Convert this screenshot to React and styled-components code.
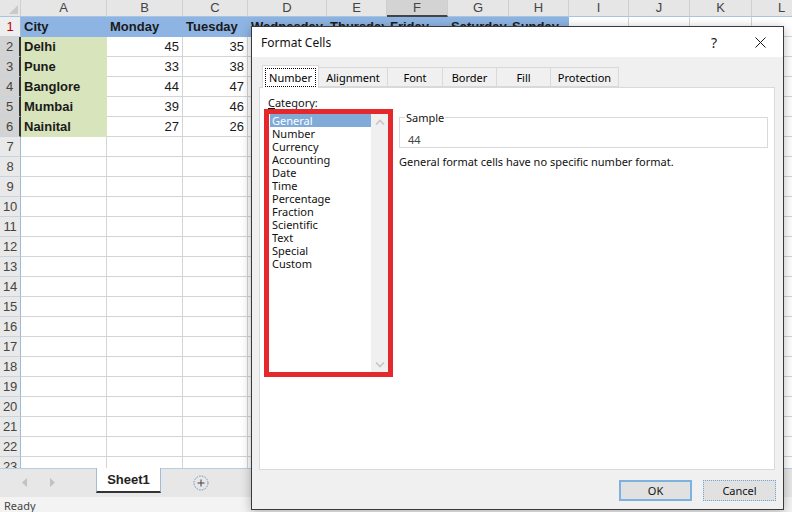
import React from 'react'
import styled, { createGlobalStyle } from 'styled-components'

const GlobalStyle = createGlobalStyle`
  html, body {
    margin: 0;
    padding: 0;
  }
  body {
    width: 792px;
    height: 512px;
    overflow: hidden;
    background: #fff;
    font-family: "Liberation Sans", Arial, sans-serif;
  }
  * {
    box-sizing: border-box;
  }
`

const COLS = [
  { id: 'A', w: 86 },
  { id: 'B', w: 76 },
  { id: 'C', w: 65 },
  { id: 'D', w: 79 },
  { id: 'E', w: 60 },
  { id: 'F', w: 61 },
  { id: 'G', w: 61 },
  { id: 'H', w: 60 },
  { id: 'I', w: 60 },
  { id: 'J', w: 61 },
  { id: 'K', w: 62 },
  { id: 'L', w: 60 },
]

const HEADER = ['City', 'Monday', 'Tuesday', 'Wednesday', 'Thursday', 'Friday', 'Saturday', 'Sunday']

const DATA = [
  ['Delhi', 45, 35],
  ['Pune', 33, 38],
  ['Banglore', 44, 47],
  ['Mumbai', 39, 46],
  ['Nainital', 27, 26],
]

const CATEGORIES = [
  'General', 'Number', 'Currency', 'Accounting', 'Date', 'Time',
  'Percentage', 'Fraction', 'Scientific', 'Text', 'Special', 'Custom',
]

const TABS = [
  { label: 'Number', w: 57 },
  { label: 'Alignment', w: 70 },
  { label: 'Font', w: 56 },
  { label: 'Border', w: 55 },
  { label: 'Fill', w: 55 },
  { label: 'Protection', w: 69 },
]

const BLUE_FILL = '#8db4e2'
const GREEN_FILL = '#d8e4bc'

const cellFor = (row, ci) => {
  if (row === 1 && ci < HEADER.length) {
    return { text: HEADER[ci], fill: BLUE_FILL, bold: true }
  }
  if (row >= 2 && row <= 6) {
    const rec = DATA[row - 2]
    if (ci === 0) return { text: rec[0], fill: GREEN_FILL, bold: true }
    if (ci === 1 || ci === 2) return { text: rec[ci], num: true }
  }
  return { text: '' }
}

export default function App() {
  const rowNumbers = Array.from({ length: 23 }, (_, i) => i + 1)

  return (
    <>
      <GlobalStyle />
      <Window>
        <Sheet>
          <HeaderRow>
            <Corner>
              <svg width="21" height="17" viewBox="0 0 21 17">
                <polygon points="18,5 18,14 9,14" fill="#c9c9c9" />
              </svg>
            </Corner>
            {COLS.map((c) => (
              <ColHead key={c.id} $w={c.w} $active={c.id === 'F'}>
                {c.id}
              </ColHead>
            ))}
          </HeaderRow>

          {rowNumbers.map((r) => (
            <Row key={r}>
              <RowHead $sel={r >= 2 && r <= 6} $first={r === 1}>
                {r}
              </RowHead>
              {COLS.map((c, ci) => {
                const cell = cellFor(r, ci)
                return (
                  <Cell key={c.id} $w={c.w} $fill={cell.fill} $bold={cell.bold} $num={cell.num}>
                    {cell.text}
                  </Cell>
                )
              })}
            </Row>
          ))}
        </Sheet>

        <TabBar>
          <NavArrows>
            <svg width="6" height="9" viewBox="0 0 6 9">
              <polygon points="5,0 5,9 0,4.5" fill="#c2c2c2" />
            </svg>
            <svg width="6" height="9" viewBox="0 0 6 9">
              <polygon points="0,0 0,9 5,4.5" fill="#c2c2c2" />
            </svg>
          </NavArrows>
          <SheetTab>Sheet1</SheetTab>
          <AddSheet>
            <svg width="16" height="16" viewBox="0 0 16 16">
              <circle cx="8" cy="8" r="7" fill="none" stroke="#6f93bb" strokeWidth="1" strokeDasharray="1.6 1.2" />
              <line x1="8" y1="4.5" x2="8" y2="11.5" stroke="#404040" strokeWidth="1" />
              <line x1="4.5" y1="8" x2="11.5" y2="8" stroke="#404040" strokeWidth="1" />
            </svg>
          </AddSheet>
        </TabBar>

        <StatusBar>Ready</StatusBar>

        <Dialog>
          <TitleBar>
            <Title>Format Cells</Title>
            <TitleButton>?</TitleButton>
            <TitleButton>
              <svg width="11" height="11" viewBox="0 0 11 11">
                <line x1="0.5" y1="0.5" x2="10.5" y2="10.5" stroke="#1a1a1a" strokeWidth="1" />
                <line x1="10.5" y1="0.5" x2="0.5" y2="10.5" stroke="#1a1a1a" strokeWidth="1" />
              </svg>
            </TitleButton>
          </TitleBar>

          <DialogBody>
            <Tabs>
              {TABS.map((t, i) => (
                <Tab key={t.label} $w={t.w} $active={i === 0}>
                  <TabLabel $active={i === 0}>{t.label}</TabLabel>
                </Tab>
              ))}
            </Tabs>

            <Panel>
              <LeftColumn>
                <FieldLabel>
                  <u>C</u>ategory:
                </FieldLabel>
                <ListFrame>
                  <ListItems>
                    {CATEGORIES.map((c, i) => (
                      <ListItem key={c} $selected={i === 0}>
                        {c}
                      </ListItem>
                    ))}
                  </ListItems>
                  <ScrollTrack>
                    <svg width="10" height="6" viewBox="0 0 10 6">
                      <polyline points="1,5.5 5,1.5 9,5.5" fill="none" stroke="#c6c6c6" strokeWidth="1.6" />
                    </svg>
                    <svg width="10" height="6" viewBox="0 0 10 6">
                      <polyline points="1,0.5 5,4.5 9,0.5" fill="none" stroke="#c6c6c6" strokeWidth="1.6" />
                    </svg>
                  </ScrollTrack>
                </ListFrame>
              </LeftColumn>

              <RightColumn>
                <SampleGroup>
                  <SampleLegend>Sample</SampleLegend>
                  <SampleValue>44</SampleValue>
                </SampleGroup>
                <Description>General format cells have no specific number format.</Description>
              </RightColumn>
            </Panel>

            <ButtonRow>
              <DialogButton $default>OK</DialogButton>
              <DialogButton>Cancel</DialogButton>
            </ButtonRow>
          </DialogBody>
        </Dialog>
      </Window>
    </>
  )
}

const Window = styled.div`
  position: relative;
  width: 792px;
  height: 512px;
  display: flex;
  flex-direction: column;
  overflow: hidden;
  background: #fff;
`

const Sheet = styled.div`
  height: 468px;
  flex: none;
  overflow: hidden;
`

const HeaderRow = styled.div`
  display: flex;
  height: 17px;
`

const Corner = styled.div`
  width: 21px;
  flex: none;
  background: #e6e6e6;
  border-right: 1px solid #cfcfcf;
  border-bottom: 1px solid #a8c4de;
  line-height: 0;
`

const ColHead = styled.div`
  flex: none;
  width: ${(p) => p.$w}px;
  background: ${(p) => (p.$active ? '#d3d3d3' : '#e6e6e6')};
  border-right: 1px solid #cfcfcf;
  border-bottom: ${(p) => (p.$active ? '2px solid #444' : '1px solid #a8c4de')};
  color: #444;
  font-size: 13px;
  line-height: 16px;
  text-align: center;
`

const Row = styled.div`
  display: flex;
  height: 20px;
`

const RowHead = styled.div`
  width: 21px;
  flex: none;
  background: ${(p) => (p.$sel ? '#d3d3d3' : p.$first ? '#eeeeee' : '#e9e9e9')};
  border-bottom: 1px solid #c9d3dd;
  border-right: ${(p) => (p.$sel ? '2px solid #333' : '1px solid #9dbbd8')};
  color: ${(p) => (p.$first ? '#c00000' : '#444')};
  font-size: 13px;
  line-height: 19px;
  text-align: center;
  letter-spacing: -0.3px;
`

const Cell = styled.div`
  flex: none;
  width: ${(p) => p.$w}px;
  height: 100%;
  display: flex;
  align-items: center;
  justify-content: ${(p) => (p.$num ? 'flex-end' : 'flex-start')};
  padding: 0 3px 1px;
  background: ${(p) => p.$fill || '#fff'};
  border-right: 1px solid ${(p) => p.$fill || '#d4d4d4'};
  border-bottom: 1px solid ${(p) => p.$fill || '#d4d4d4'};
  color: #1a1a1a;
  font-size: 13px;
  font-weight: ${(p) => (p.$bold ? 700 : 400)};
  white-space: nowrap;
  overflow: hidden;
`

const TabBar = styled.div`
  height: 29px;
  flex: none;
  display: flex;
  align-items: flex-start;
  background: #e7e7e7;
  border-top: 1px solid #b9cde0;
`

const NavArrows = styled.div`
  width: 96px;
  height: 27px;
  display: flex;
  align-items: center;
  gap: 22px;
  padding-left: 22px;
`

const SheetTab = styled.div`
  width: 65px;
  height: 25px;
  margin-top: -1px;
  display: flex;
  align-items: center;
  justify-content: center;
  background: #fff;
  border-left: 1px solid #9fbdd9;
  border-right: 1px solid #9fbdd9;
  border-bottom: 2px solid #333;
  color: #222;
  font-size: 13px;
  font-weight: 700;
`

const AddSheet = styled.div`
  margin-left: 32px;
  height: 27px;
  display: flex;
  align-items: center;
`

const StatusBar = styled.div`
  flex: 1;
  background: #f3f3f3;
  color: #444;
  font-family: "Noto Sans", "Liberation Sans", sans-serif;
  font-size: 11px;
  line-height: 13px;
  padding: 2px 0 0 4px;
`

const Dialog = styled.div`
  position: absolute;
  left: 251px;
  top: 26px;
  width: 533px;
  height: 484px;
  display: flex;
  flex-direction: column;
  background: #f0f0f0;
  border: 1px solid #3a3a3a;
  box-shadow: 0 2px 10px rgba(0, 0, 0, 0.28);
  font-family: "Noto Sans", "Liberation Sans", sans-serif;
  font-size: 11px;
  color: #000;
`

const TitleBar = styled.div`
  height: 30px;
  flex: none;
  display: flex;
  align-items: center;
  background: #fff;
  padding-left: 9px;
`

const Title = styled.div`
  flex: 1;
  font-size: 12px;
  color: #111;
`

const TitleButton = styled.div`
  width: 46px;
  height: 30px;
  display: flex;
  align-items: center;
  justify-content: center;
  font-size: 14px;
  color: #222;
`

const DialogBody = styled.div`
  flex: 1;
  display: flex;
  flex-direction: column;
  padding: 8px 8px 8px 7px;
`

const Tabs = styled.div`
  display: flex;
  align-items: flex-end;
  padding-left: 3px;
  height: 22px;
  flex: none;
`

const Tab = styled.div`
  position: relative;
  z-index: ${(p) => (p.$active ? 1 : 0)};
  width: ${(p) => p.$w}px;
  height: ${(p) => (p.$active ? 23 : 20)}px;
  margin-right: -1px;
  margin-bottom: ${(p) => (p.$active ? -1 : 0)}px;
  display: flex;
  align-items: center;
  justify-content: center;
  background: ${(p) => (p.$active ? '#fff' : '#f0f0f0')};
  border: 1px solid #d9d9d9;
  border-bottom: ${(p) => (p.$active ? 'none' : '1px solid #d9d9d9')};
`

const TabLabel = styled.span`
  padding: 1px 3px;
  line-height: 15px;
  outline: ${(p) => (p.$active ? '1px dotted #000' : 'none')};
`

const Panel = styled.div`
  flex: 1;
  display: flex;
  gap: 6px;
  background: #fff;
  border: 1px solid #d9d9d9;
  padding: 8px 6px 0 4px;
`

const LeftColumn = styled.div`
  display: flex;
  flex-direction: column;
`

const FieldLabel = styled.div`
  line-height: 13px;
  padding-left: 4px;
  color: #111;
`

const ListFrame = styled.div`
  width: 129px;
  height: 268px;
  display: flex;
  border: 5px solid #e4282b;
  background: #fff;
`

const ListItems = styled.div`
  flex: 1;
  padding-left: 1px;
`

const ListItem = styled.div`
  height: 13px;
  line-height: 13px;
  padding-left: 2px;
  background: ${(p) => (p.$selected ? '#80abd8' : 'transparent')};
  color: ${(p) => (p.$selected ? '#fff' : '#111')};
  white-space: nowrap;
`

const ScrollTrack = styled.div`
  width: 17px;
  display: flex;
  flex-direction: column;
  justify-content: space-between;
  align-items: center;
  padding: 5px 0 4px;
  background: #f0f0f0;
`

const RightColumn = styled.div`
  flex: 1;
  padding-top: 15px;
`

const SampleGroup = styled.fieldset`
  margin: 0;
  border: 1px solid #d9d9d9;
  padding: 0 8px 1px;
  min-width: 0;
`

const SampleLegend = styled.legend`
  margin-left: -3px;
  padding: 0 1px;
  line-height: 13px;
  color: #111;
`

const SampleValue = styled.div`
  margin-top: 9px;
  line-height: 13px;
  color: #444;
`

const Description = styled.div`
  margin-top: 7px;
  line-height: 13px;
  color: #111;
`

const ButtonRow = styled.div`
  display: flex;
  justify-content: flex-end;
  gap: 11px;
  padding-top: 10px;
  margin-right: -1px;
`

const DialogButton = styled.div`
  width: 73px;
  height: 21px;
  display: flex;
  align-items: center;
  justify-content: center;
  background: #e1e1e1;
  border: ${(p) => (p.$default ? '2px solid #7eb0e0' : '1px dotted #6ea3d6')};
  color: #111;
`
